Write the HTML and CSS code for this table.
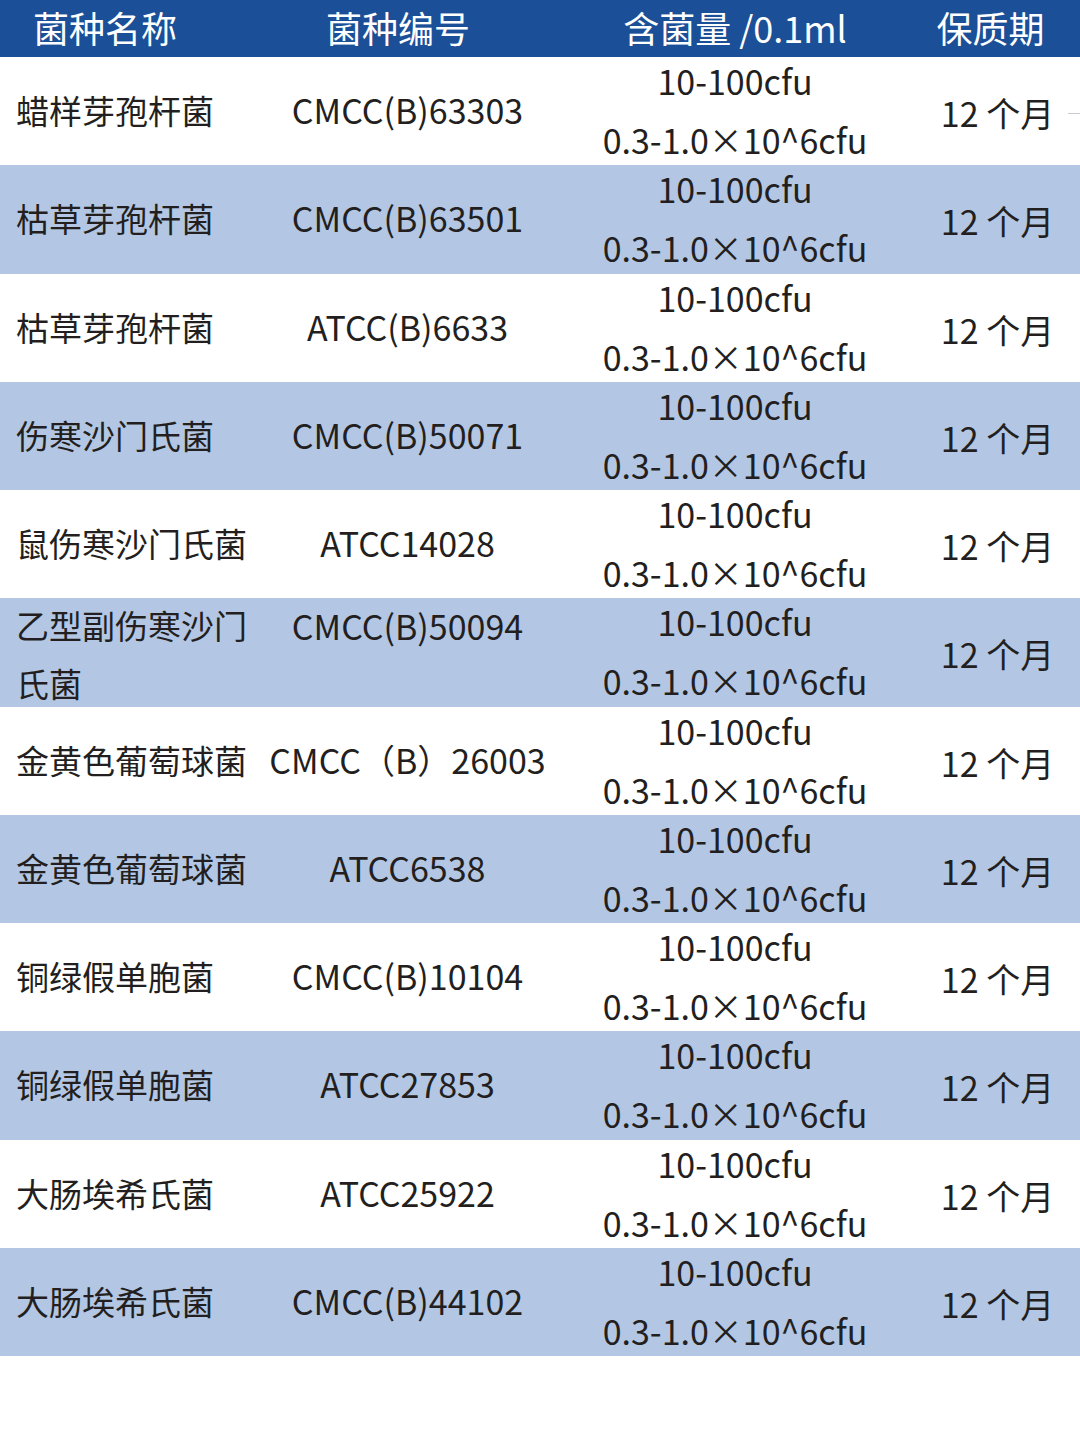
FILE: index.html
```html
<!DOCTYPE html>
<html lang="zh-CN">
<head>
<meta charset="utf-8">
<title>菌种列表</title>
<link rel="stylesheet" href="styles.css">
</head>
<body>
<div class="table">
  <div class="row head">
    <div class="c1">菌种名称</div>
    <div class="c2">菌种编号</div>
    <div class="c3">含菌量 /0.1ml</div>
    <div class="c4">保质期</div>
  </div>
  <div class="row first">
    <div class="c1">蜡样芽孢杆菌</div>
    <div class="c2">CMCC(B)63303</div>
    <div class="c3"><span>10-100cfu</span><span>0.3-1.0×10^6cfu</span></div>
    <div class="c4">12 个月</div>
  </div>
  <div class="row alt">
    <div class="c1">枯草芽孢杆菌</div>
    <div class="c2">CMCC(B)63501</div>
    <div class="c3"><span>10-100cfu</span><span>0.3-1.0×10^6cfu</span></div>
    <div class="c4">12 个月</div>
  </div>
  <div class="row">
    <div class="c1">枯草芽孢杆菌</div>
    <div class="c2">ATCC(B)6633</div>
    <div class="c3"><span>10-100cfu</span><span>0.3-1.0×10^6cfu</span></div>
    <div class="c4">12 个月</div>
  </div>
  <div class="row alt">
    <div class="c1">伤寒沙门氏菌</div>
    <div class="c2">CMCC(B)50071</div>
    <div class="c3"><span>10-100cfu</span><span>0.3-1.0×10^6cfu</span></div>
    <div class="c4">12 个月</div>
  </div>
  <div class="row">
    <div class="c1">鼠伤寒沙门氏菌</div>
    <div class="c2">ATCC14028</div>
    <div class="c3"><span>10-100cfu</span><span>0.3-1.0×10^6cfu</span></div>
    <div class="c4">12 个月</div>
  </div>
  <div class="row alt">
    <div class="c1 wrap">乙型副伤寒沙门氏菌</div>
    <div class="c2 top">CMCC(B)50094</div>
    <div class="c3"><span>10-100cfu</span><span>0.3-1.0×10^6cfu</span></div>
    <div class="c4">12 个月</div>
  </div>
  <div class="row">
    <div class="c1">金黄色葡萄球菌</div>
    <div class="c2">CMCC（B）26003</div>
    <div class="c3"><span>10-100cfu</span><span>0.3-1.0×10^6cfu</span></div>
    <div class="c4">12 个月</div>
  </div>
  <div class="row alt">
    <div class="c1">金黄色葡萄球菌</div>
    <div class="c2">ATCC6538</div>
    <div class="c3"><span>10-100cfu</span><span>0.3-1.0×10^6cfu</span></div>
    <div class="c4">12 个月</div>
  </div>
  <div class="row">
    <div class="c1">铜绿假单胞菌</div>
    <div class="c2">CMCC(B)10104</div>
    <div class="c3"><span>10-100cfu</span><span>0.3-1.0×10^6cfu</span></div>
    <div class="c4">12 个月</div>
  </div>
  <div class="row alt">
    <div class="c1">铜绿假单胞菌</div>
    <div class="c2">ATCC27853</div>
    <div class="c3"><span>10-100cfu</span><span>0.3-1.0×10^6cfu</span></div>
    <div class="c4">12 个月</div>
  </div>
  <div class="row">
    <div class="c1">大肠埃希氏菌</div>
    <div class="c2">ATCC25922</div>
    <div class="c3"><span>10-100cfu</span><span>0.3-1.0×10^6cfu</span></div>
    <div class="c4">12 个月</div>
  </div>
  <div class="row alt">
    <div class="c1">大肠埃希氏菌</div>
    <div class="c2">CMCC(B)44102</div>
    <div class="c3"><span>10-100cfu</span><span>0.3-1.0×10^6cfu</span></div>
    <div class="c4">12 个月</div>
  </div>
</div>
</body>
</html>
```
FILE: styles.css
```css
html, body {
  margin: 0;
  padding: 0;
  background: #ffffff;
}
body {
  font-family: "Noto Sans CJK SC", "Noto Sans", sans-serif;
  color: #231f20;
  width: 1080px;
}
.table {
  display: flex;
  flex-direction: column;
}
.row {
  display: grid;
  grid-template-columns: 260px 295px 360px 165px;
  grid-template-rows: minmax(0, 1fr);
  box-sizing: border-box;
  height: 108.25px;
  padding-bottom: 2px;
  align-items: center;
  background: #ffffff;
  font-size: 33px;
  line-height: 58px;
  position: relative;
}
.row.alt {
  background: #b3c7e4;
}
.row.head {
  height: 57px;
  padding-bottom: 2px;
  background: #1b4f97;
  color: #ffffff;
  font-size: 36px;
  line-height: 55px;
}
.row.first::after {
  content: "";
  position: absolute;
  right: 0;
  top: 56px;
  width: 12px;
  height: 1px;
  background: #c8ccd2;
}
.c1 {
  padding-left: 16px;
  white-space: nowrap;
}
.c1.wrap {
  white-space: normal;
  padding-right: 12px;
  padding-top: 6px;
}
.c2, .c3, .c4 {
  text-align: center;
  white-space: nowrap;
}
.c2 {
  font-size: 34px;
}
.c2.top {
  align-self: start;
  line-height: 56px;
}
.c3 {
  display: flex;
  flex-direction: column;
  align-items: center;
  font-size: 34px;
  line-height: 59px;
}
.c4 {
  font-size: 34px;
  padding-top: 6px;
}
.head .c1 {
  padding-left: 33px;
}
.head .c2, .head .c3, .head .c4 {
  font-size: 36px;
  line-height: 55px;
}
.head .c2 {
  text-align: left;
  padding-left: 66px;
}
.head .c3 {
  display: block;
}
.head .c4 {
  padding-top: 0;
  padding-right: 14px;
}
```
